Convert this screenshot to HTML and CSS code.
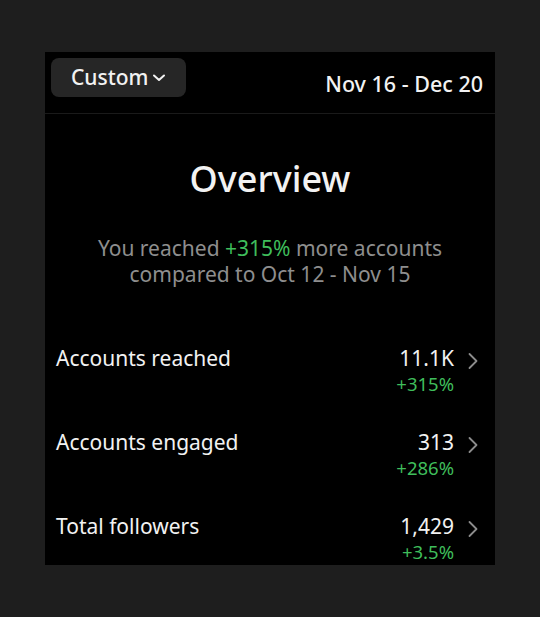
FILE: index.html
```html
<!DOCTYPE html>
<html>
<head>
<meta charset="utf-8">
<link rel="stylesheet" href="styles.css">
</head>
<body>
<div class="panel">
  <div class="header">
    <button class="range">Custom
      <svg class="caret" width="14" height="10" viewBox="0 0 14 10"><path d="M2 2.5 L7 7 L12 2.5" fill="none" stroke="#f2f2f2" stroke-width="2" stroke-linecap="round" stroke-linejoin="round"/></svg>
    </button>
    <div class="dates">Nov 16 - Dec 20</div>
  </div>
  <div class="overview">
    <h1 class="title">Overview</h1>
    <p class="sub">You reached <span class="green">+315%</span> more accounts<br>compared to Oct 12 - Nov 15</p>
  </div>
  <div class="rows">
    <div class="row">
      <div class="label">Accounts reached</div>
      <div class="vals"><div class="val">11.1K</div><div class="delta">+315%</div></div>
      <svg class="chev" width="12" height="18" viewBox="0 0 12 18"><path d="M2.5 2 L9.5 9 L2.5 16" fill="none" stroke="#8c8c8c" stroke-width="1.8" stroke-linecap="round" stroke-linejoin="round"/></svg>
    </div>
    <div class="row">
      <div class="label">Accounts engaged</div>
      <div class="vals"><div class="val">313</div><div class="delta">+286%</div></div>
      <svg class="chev" width="12" height="18" viewBox="0 0 12 18"><path d="M2.5 2 L9.5 9 L2.5 16" fill="none" stroke="#8c8c8c" stroke-width="1.8" stroke-linecap="round" stroke-linejoin="round"/></svg>
    </div>
    <div class="row">
      <div class="label">Total followers</div>
      <div class="vals"><div class="val">1,429</div><div class="delta">+3.5%</div></div>
      <svg class="chev" width="12" height="18" viewBox="0 0 12 18"><path d="M2.5 2 L9.5 9 L2.5 16" fill="none" stroke="#8c8c8c" stroke-width="1.8" stroke-linecap="round" stroke-linejoin="round"/></svg>
    </div>
  </div>
</div>
</body>
</html>
```
FILE: styles.css
```css
html, body {
  margin: 0;
  padding: 0;
  background: #1e1e1e;
}
body {
  font-family: "Noto Sans", "Open Sans", sans-serif;
  color: #f2f2f2;
  padding: 52px 0 0 45px;
  height: 617px;
  box-sizing: border-box;
}
.panel {
  width: 450px;
  height: 513px;
  background: #000;
  overflow: hidden;
}
.header {
  height: 62px;
  box-sizing: border-box;
  border-bottom: 1px solid #1a1a1a;
  display: flex;
  align-items: flex-start;
  justify-content: space-between;
  padding: 6px 12px 0 6px;
}
.range {
  height: 39px;
  width: 135px;
  background: #262626;
  border: none;
  border-radius: 8px;
  color: #f2f2f2;
  font-family: inherit;
  font-size: 21px;
  font-weight: 500;
  display: flex;
  align-items: center;
  padding: 0 0 2px 20px;
  gap: 4px;
}
.caret { margin-top: 2px; }
.dates {
  font-size: 21.5px;
  line-height: 26px;
  font-weight: 500;
  margin-top: 13px;
}
.overview {
  text-align: center;
  padding-top: 43px;
}
.title {
  margin: 0;
  font-size: 36px;
  font-weight: 500;
  line-height: 44px;
}
.sub {
  margin: 34px 0 0;
  font-size: 21px;
  line-height: 26px;
  color: #8e8e8e;
}
.green { color: #3fbd5b; }
.rows {
  padding: 57px 16px 0 11px;
  display: flex;
  flex-direction: column;
  gap: 32px;
}
.row {
  display: flex;
  align-items: flex-start;
  height: 52px;
}
.label {
  flex: 1;
  font-size: 21px;
  line-height: 28px;
}
.vals {
  text-align: right;
}
.val {
  font-size: 21px;
  line-height: 28px;
}
.delta {
  font-size: 18.5px;
  line-height: 24px;
  color: #3fbd5b;
}
.chev {
  margin: 8px 0 0 13px;
}
```
